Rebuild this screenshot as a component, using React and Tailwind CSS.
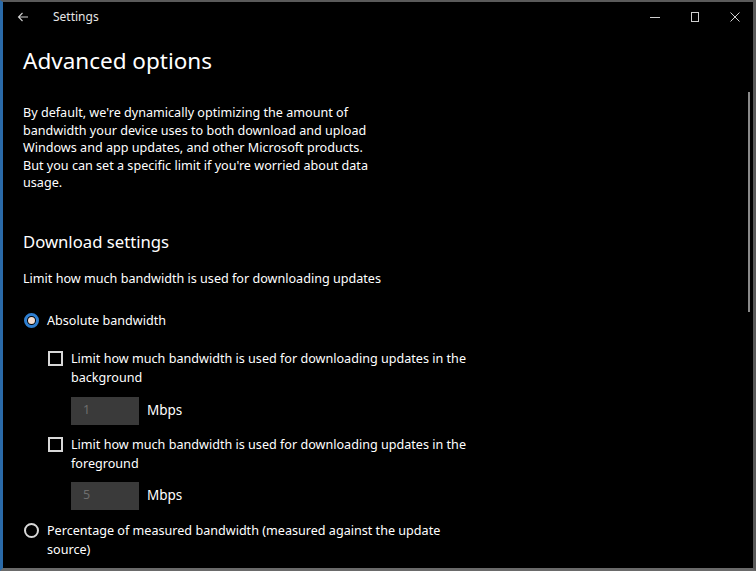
import React from "react";

const font = { fontFamily: '"Noto Sans", "Open Sans", sans-serif' };

function Radio({ checked }) {
  return checked ? (
    <span className="flex h-[15px] w-[15px] shrink-0 items-center justify-center rounded-full border-[3px] border-[#2f7fd0] bg-black">
      <span className="h-[7px] w-[7px] rounded-full bg-[#f3dccf]" />
    </span>
  ) : (
    <span className="block h-[15px] w-[15px] shrink-0 rounded-full border-2 border-[#d8d8d8]" />
  );
}

function Checkbox() {
  return <span className="mt-[2px] block h-[15px] w-[15px] shrink-0 border-2 border-[#d8d8d8]" />;
}

function SpeedInput({ value }) {
  return (
    <div className="ml-[48px] flex items-center gap-2">
      <div className="flex h-[28px] w-[68px] items-center bg-[#3a3a3a] pl-[12px] text-[12.5px] text-[#6e6e6e]">
        {value}
      </div>
      <span className="text-[13.5px] text-white">Mbps</span>
    </div>
  );
}

export default function App() {
  return (
    <div
      style={font}
      className="relative h-[571px] w-[756px] overflow-hidden border-t-2 border-r-[3px] border-b-[3px] border-l-[3px] border-t-[#5a5a5a] border-r-[#5a5a5a] border-b-[#6a6a6a] border-l-[#2a6aa8] bg-black text-white"
    >
      {/* title bar */}
      <div className="flex h-[30px] items-center">
        <svg className="ml-[14px] h-[12px] w-[12px]" viewBox="0 0 12 12" fill="none" stroke="#d0d0d0" strokeWidth="1.1">
          <path d="M11 6H1.5M5.5 2L1.5 6l4 4" />
        </svg>
        <span className="ml-[24px] text-[12px] text-[#e6e6e6]">Settings</span>
        <div className="ml-auto flex items-center">
          <svg className="mr-[30px] h-[10px] w-[10px]" viewBox="0 0 10 10" stroke="#cfcfcf" strokeWidth="1">
            <path d="M0 5.5h10" />
          </svg>
          <svg className="mr-[30px] h-[10px] w-[10px]" viewBox="0 0 10 10" fill="none" stroke="#cfcfcf" strokeWidth="1">
            <rect x="1.5" y="0.5" width="7" height="9" />
          </svg>
          <svg className="mr-[13px] h-[10px] w-[10px]" viewBox="0 0 10 10" stroke="#cfcfcf" strokeWidth="1">
            <path d="M0.5 0.5l9 9M9.5 0.5l-9 9" />
          </svg>
        </div>
      </div>

      {/* scrollbar */}
      <div className="absolute right-[3px] top-[90px] h-[220px] w-[2px] bg-[#8a8a8a]" />

      <div className="pl-[20px]">
        <h1 className="mt-[9px] text-[22.5px] leading-[40px] font-normal">Advanced options</h1>

        <p className="mt-[23px] w-[360px] text-[12.6px] leading-[17.5px]">
          By default, we're dynamically optimizing the amount of bandwidth your device uses to both download and upload
          Windows and app updates, and other Microsoft products. But you can set a specific limit if you're worried about
          data usage.
        </p>

        <h2 className="mt-[37px] text-[16.7px] leading-[26px] font-normal">Download settings</h2>

        <p className="mt-[15px] text-[12.6px] leading-[18px]">Limit how much bandwidth is used for downloading updates</p>

        <label className="mt-[24px] flex items-center gap-[8px] pl-[1px] text-[12.6px] leading-[18px]">
          <Radio checked />
          <span>Absolute bandwidth</span>
        </label>

        <label className="mt-[19px] ml-[25px] flex items-start gap-[8px] text-[12.6px] leading-[19px]">
          <Checkbox />
          <span className="w-[410px]">Limit how much bandwidth is used for downloading updates in the background</span>
        </label>
        <div className="mt-[10px]">
          <SpeedInput value="1" />
        </div>

        <label className="mt-[10px] ml-[25px] flex items-start gap-[8px] text-[12.6px] leading-[19px]">
          <Checkbox />
          <span className="w-[410px]">Limit how much bandwidth is used for downloading updates in the foreground</span>
        </label>
        <div className="mt-[9px]">
          <SpeedInput value="5" />
        </div>

        <label className="mt-[11px] flex items-start gap-[8px] pl-[1px] text-[12.6px] leading-[19px]">
          <span className="mt-[2px] flex">
            <Radio />
          </span>
          <span className="w-[420px]">Percentage of measured bandwidth (measured against the update source)</span>
        </label>
      </div>
    </div>
  );
}
